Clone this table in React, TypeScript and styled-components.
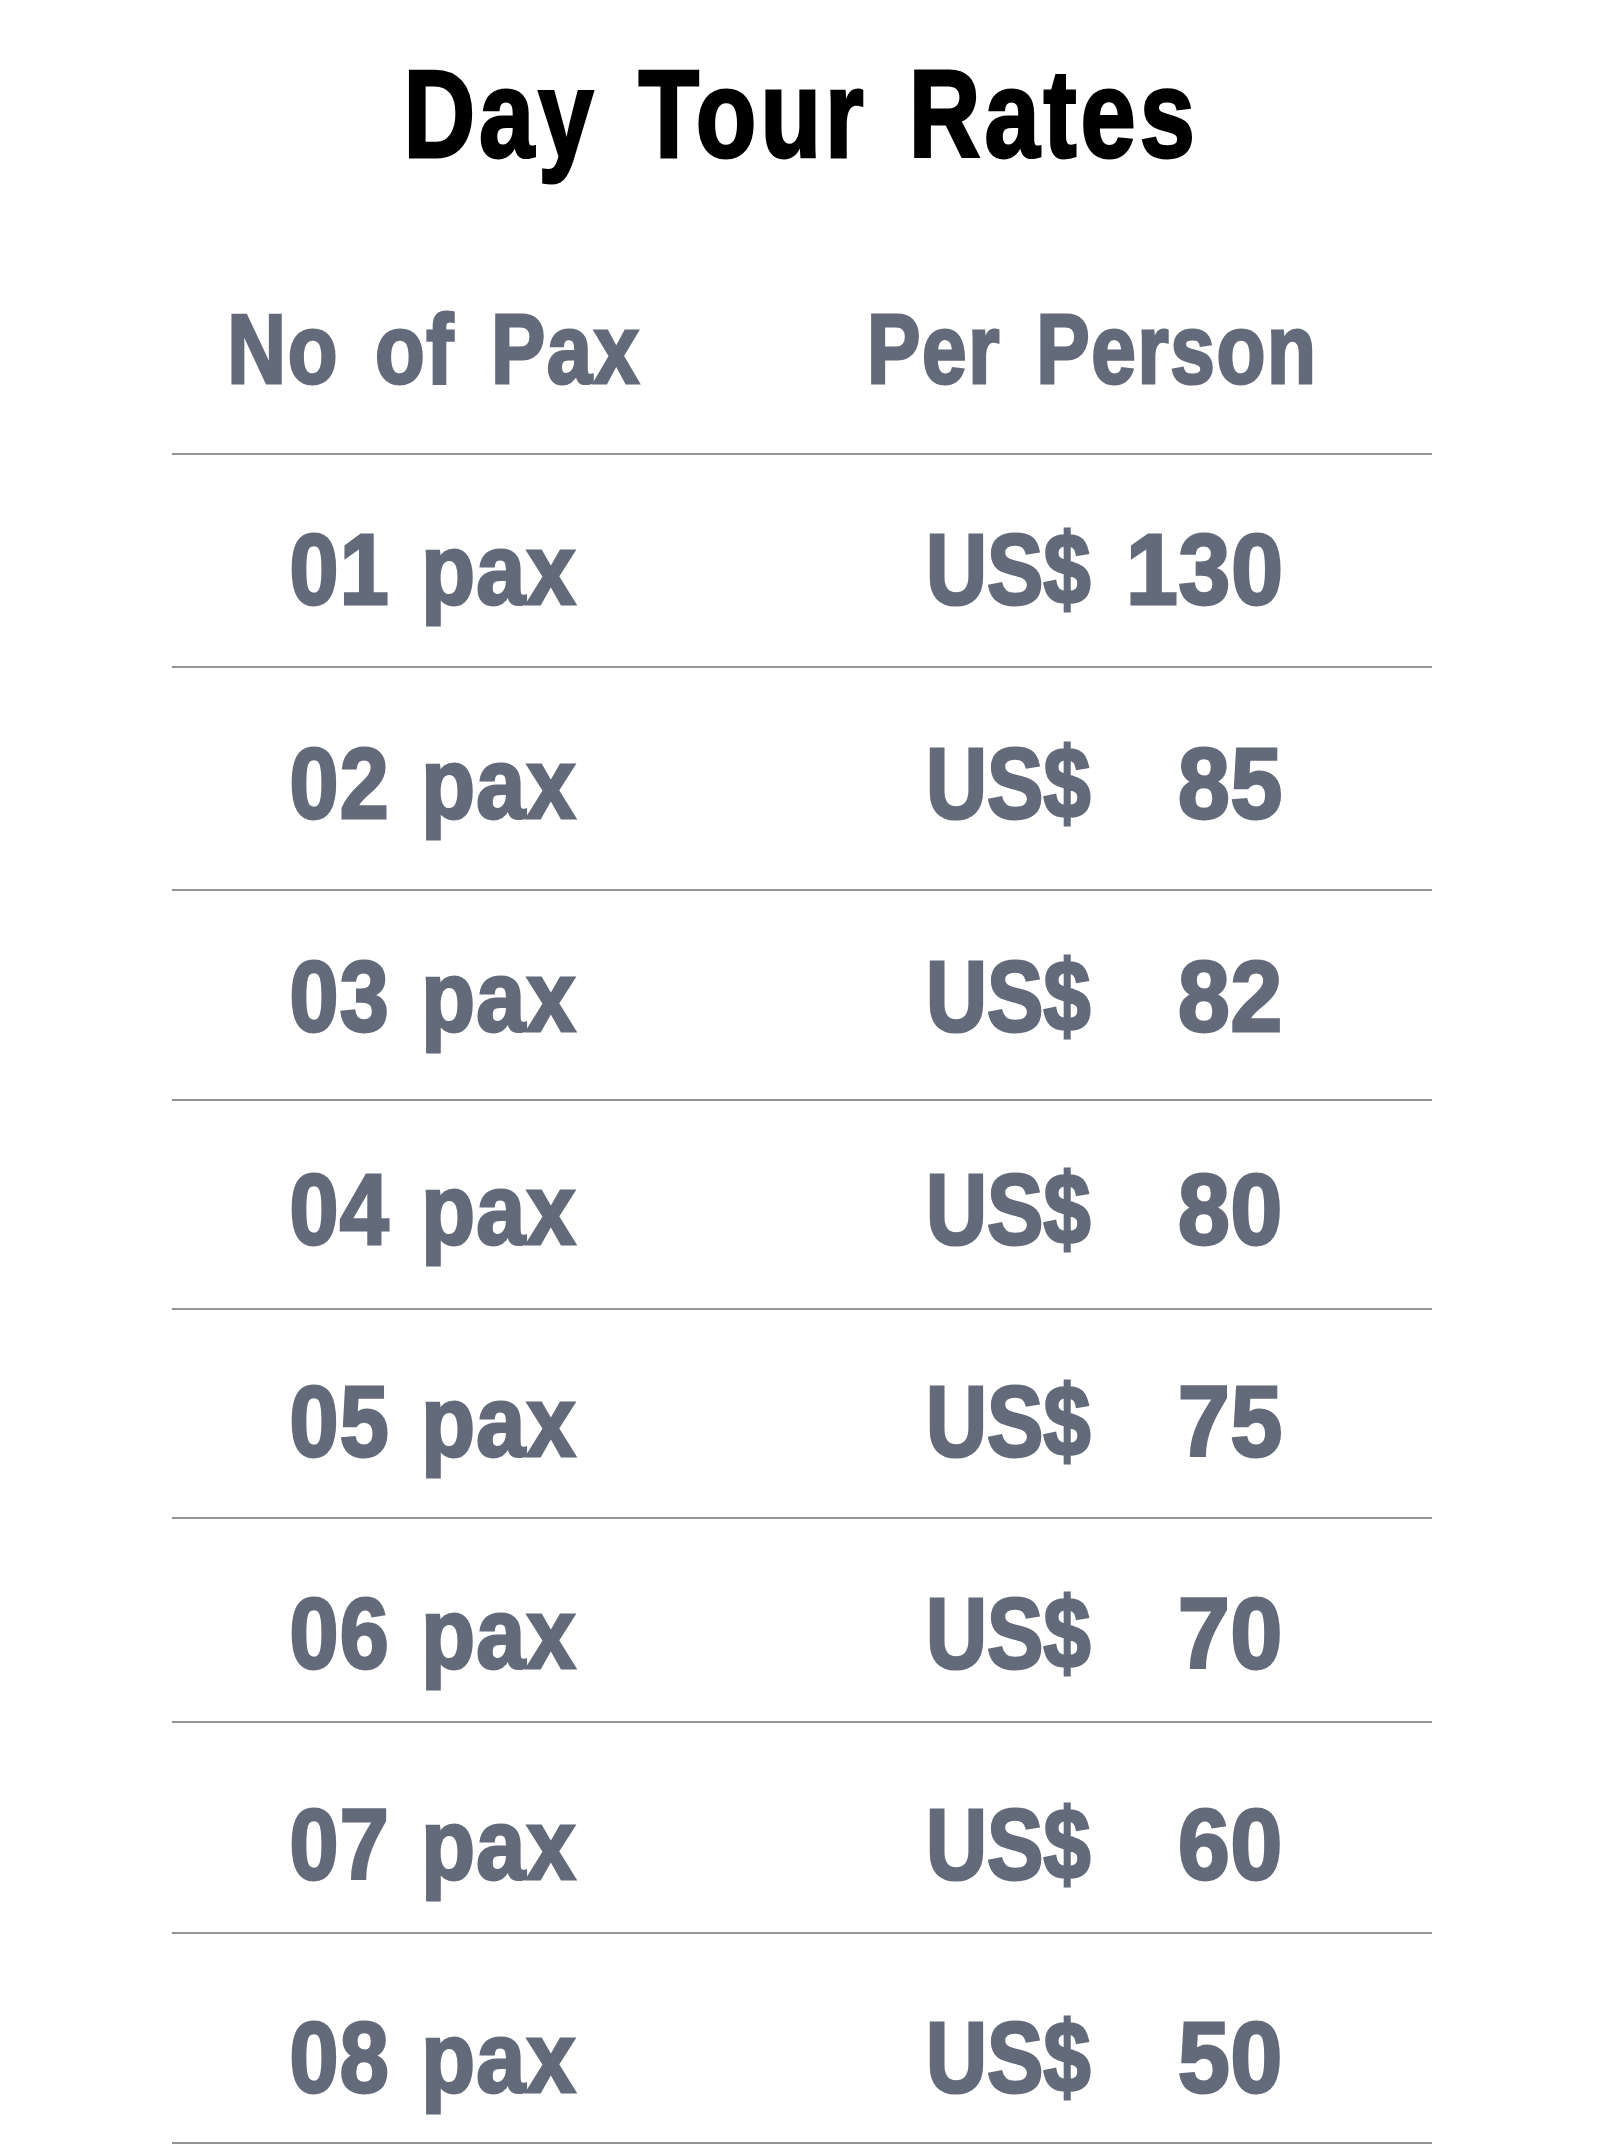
import React from "react";
import styled, { createGlobalStyle } from "styled-components";

const Global = createGlobalStyle`
  html, body { margin: 0; padding: 0; background: #ffffff; }
  body { font-family: "Liberation Sans", Arial, sans-serif; }
`;

const Page = styled.main`
  width: 1603px;
  display: flex;
  flex-direction: column;
  align-items: center;
`;

const Title = styled.h1`
  margin: 0;
  padding-top: 52px;
  font-size: 124px;
  line-height: 1;
  font-weight: 700;
  color: #000;
  text-align: center;
  width: 100%;
`;

const Squeeze = styled.span<{
  $sx: number;
  $stroke?: number;
  $origin?: string;
  $ls?: number;
  $ws?: number;
}>`
  display: inline-block;
  white-space: pre;
  transform: scaleX(${(p) => p.$sx});
  transform-origin: ${(p) => p.$origin ?? "center"};
  letter-spacing: ${(p) => p.$ls ?? 0}px;
  word-spacing: ${(p) => p.$ws ?? 0}px;
  -webkit-text-stroke: ${(p) => p.$stroke ?? 3}px currentColor;
`;

const Table = styled.section`
  width: 1260px;
  display: flex;
  flex-direction: column;
  color: #636b7b;
  font-weight: 700;
`;

const Row = styled.div<{ $h: number; $pt: number }>`
  box-sizing: border-box;
  height: ${(p) => p.$h}px;
  padding-top: ${(p) => p.$pt}px;
  display: grid;
  grid-template-columns: 524px 1fr;
  align-items: start;
  border-bottom: 2px solid #959292;
  font-size: 100px;
  line-height: 1;
`;

const HeadRow = styled(Row)`
  font-size: 98px;
`;

const PaxCell = styled.div`
  text-align: center;
`;

const PriceCell = styled.div<{ $pl: number }>`
  padding-left: ${(p) => p.$pl}px;
`;

const Price = styled.div`
  width: 358px;
  display: flex;
`;

const Currency = styled.div`
  flex: 1 1 0;
  min-width: 0;
`;

const Amount = styled.div`
  flex: none;
`;

const rates = [
  { pax: "01", price: "130", h: 213, pt: 64 },
  { pax: "02", price: "85", h: 223, pt: 65 },
  { pax: "03", price: "82", h: 210, pt: 55 },
  { pax: "04", price: "80", h: 209, pt: 58 },
  { pax: "05", price: "75", h: 209, pt: 61 },
  { pax: "06", price: "70", h: 204, pt: 64 },
  { pax: "07", price: "60", h: 211, pt: 71 },
  { pax: "08", price: "50", h: 210, pt: 73 },
];

export default function App() {
  return (
    <>
      <Global />
      <Page>
        <Title>
          <Squeeze $sx={0.8} $ls={5} $ws={12}>
            Day Tour Rates
          </Squeeze>
        </Title>
        <Table>
          <HeadRow $h={279} $pt={124}>
            <PaxCell>
              <Squeeze $sx={0.83} $ls={2} $ws={14}>
                No of Pax
              </Squeeze>
            </PaxCell>
            <PriceCell $pl={171}>
              <Squeeze $sx={0.817} $ls={2} $ws={14} $origin="left">
                Per Person
              </Squeeze>
            </PriceCell>
          </HeadRow>
          {rates.map((r) => (
            <Row key={r.pax} $h={r.h} $pt={r.pt}>
              <PaxCell>
                <Squeeze $sx={0.88} $ls={1.5} $ws={6}>{`${r.pax} pax`}</Squeeze>
              </PaxCell>
              <PriceCell $pl={230}>
                <Price>
                  <Currency>
                    <Squeeze $sx={0.845} $origin="left">
                      US$
                    </Squeeze>
                  </Currency>
                  <Amount>
                    <Squeeze $sx={0.93} $ls={1} $origin="right">
                      {r.price}
                    </Squeeze>
                  </Amount>
                </Price>
              </PriceCell>
            </Row>
          ))}
        </Table>
      </Page>
    </>
  );
}
